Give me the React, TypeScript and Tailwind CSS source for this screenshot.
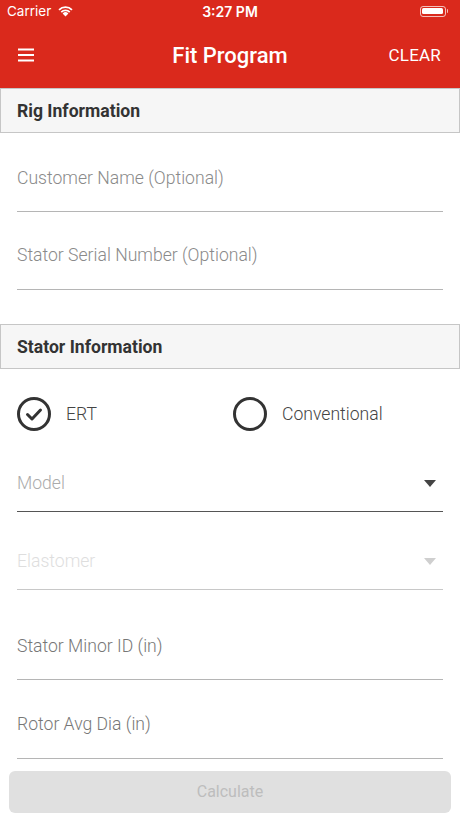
import React from "react";

const Field = ({ label, pt, pb, color = "text-[#8a8a8a]", line = "border-[#b5b5b5]", arrow, arrowColor }: { label: string; pt: number; pb: number; color?: string; line?: string; arrow?: boolean; arrowColor?: string }) => (
  <div className="px-[17px]">
    <div className={`flex items-center justify-between border-b ${line}`} style={{ paddingTop: pt, paddingBottom: pb }}>
      <span className={`text-[17.6px] leading-[22px] font-light ${color}`}>{label}</span>
      {arrow && (
        <svg width="12" height="7" viewBox="0 0 12 7" className="mr-[7px]">
          <path d="M0 0 L12 0 L6 7 Z" fill={arrowColor} />
        </svg>
      )}
    </div>
  </div>
);

const Header = ({ title }: { title: string }) => (
  <div className="h-[45px] bg-[#f6f6f6] border border-[#c6c6c6] flex items-center px-[16px] pt-[1px]">
    <span className="text-[17.6px] font-bold text-[#333]">{title}</span>
  </div>
);

export default function App() {
  return (
    <div className="w-[460px] h-[818px] bg-white overflow-hidden relative" style={{ fontFamily: "Roboto, 'Noto Sans', sans-serif" }}>
      <div className="bg-[#da291c] text-white">
        <div className="h-[22px] relative flex items-center px-[7px]" style={{ fontFamily: "Inter, 'Liberation Sans', sans-serif" }}>
          <span className="text-[13.5px]">Carrier</span>
          <svg width="17" height="12" viewBox="0 0 17 12" className="ml-[6px]">
            <path d="M8.5 11.5 L5.6 8.4 A4.2 4.2 0 0 1 11.4 8.4 Z" fill="white" />
            <path d="M3.6 6.4 A7 7 0 0 1 13.4 6.4 L12.1 7.7 A5.2 5.2 0 0 0 4.9 7.7 Z" fill="white" />
            <path d="M1.4 4.2 A10 10 0 0 1 15.6 4.2 L14.3 5.5 A8.2 8.2 0 0 0 2.7 5.5 Z" fill="white" />
          </svg>
          <span className="absolute left-0 right-0 text-center text-[14px] font-semibold">3:27 PM</span>
          <div className="ml-auto mr-[5px] flex items-center">
            <div className="w-[26px] h-[11px] rounded-[3px] border border-white/70 p-[1.5px]">
              <div className="w-full h-full bg-white rounded-[1.5px]" />
            </div>
            <div className="w-[1.5px] h-[4px] bg-white/70 ml-[1px] rounded-r" />
          </div>
        </div>
        <div className="h-[66px] flex items-center px-[18px] relative">
          <svg width="16" height="14" viewBox="0 0 16 14">
            <rect x="0" y="0.5" width="16" height="2" fill="white" />
            <rect x="0" y="6" width="16" height="2" fill="white" />
            <rect x="0" y="11.5" width="16" height="2" fill="white" />
          </svg>
          <span className="absolute left-0 right-0 text-center text-[22px] font-medium">Fit Program</span>
          <span className="ml-auto mr-[1px] text-[17px] tracking-[0.2px] pt-[2px]">CLEAR</span>
        </div>
      </div>
      <Header title="Rig Information" />
      <Field label="Customer Name (Optional)" pt={34} pb={22} />
      <Field label="Stator Serial Number (Optional)" pt={32} pb={23} />
      <div className="mt-[34px]">
        <Header title="Stator Information" />
      </div>
      <div className="flex items-center px-[17px] mt-[28px] h-[34px]">
        <div className="flex items-center w-[216px]">
          <svg width="34" height="34" viewBox="0 0 34 34">
            <circle cx="17" cy="17" r="15.5" fill="none" stroke="#333" strokeWidth="3" />
            <path d="M10.5 17.5 L15 22 L23.5 13" fill="none" stroke="#333" strokeWidth="3" strokeLinecap="round" strokeLinejoin="round" />
          </svg>
          <span className="ml-[15px] text-[17.6px] font-light text-[#444]">ERT</span>
        </div>
        <div className="flex items-center">
          <svg width="34" height="34" viewBox="0 0 34 34">
            <circle cx="17" cy="17" r="15.5" fill="none" stroke="#333" strokeWidth="3" />
          </svg>
          <span className="ml-[15px] text-[17.6px] font-light text-[#444]">Conventional</span>
        </div>
      </div>
      <Field label="Model" pt={41} pb={17} color="text-[#ababab]" line="border-[#555]" arrow arrowColor="#444" />
      <Field label="Elastomer" pt={38} pb={17} color="text-[#dedede]" line="border-[#c8c8c8]" arrow arrowColor="#cfcfcf" />
      <Field label="Stator Minor ID (in)" pt={45} pb={22} color="text-[#777]" />
      <Field label="Rotor Avg Dia (in)" pt={33} pb={23} color="text-[#777]" />
      <div className="px-[9px] mt-[12px]">
        <div className="h-[42px] rounded-[6px] bg-[#e0e0e0] flex items-center justify-center">
          <span className="text-[16px] text-[#bdbdbd]">Calculate</span>
        </div>
      </div>
    </div>
  );
}
